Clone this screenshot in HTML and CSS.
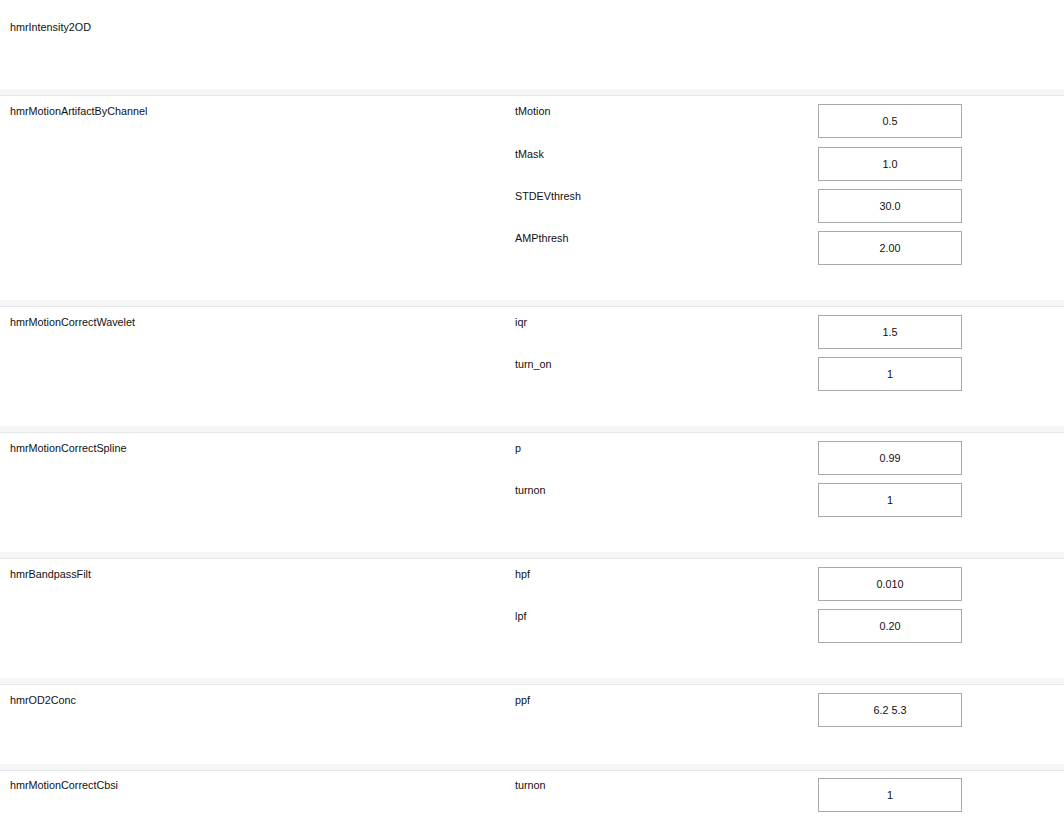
FILE: index.html
```
<!DOCTYPE html>
<html>
<head>
<meta charset="utf-8">
<link rel="stylesheet" href="styles.css">
</head>
<body>
<div class="list">
  <div class="row row-first">
    <div class="name">hmrIntensity2OD</div>
    <div class="params"></div>
  </div>
  <div class="sep"></div>
  <div class="row row-four">
    <div class="name">hmrMotionArtifactByChannel</div>
    <div class="params">
      <div class="param"><div class="plabel">tMotion</div><div class="pinput">0.5</div></div>
      <div class="param"><div class="plabel">tMask</div><div class="pinput">1.0</div></div>
      <div class="param"><div class="plabel">STDEVthresh</div><div class="pinput">30.0</div></div>
      <div class="param"><div class="plabel">AMPthresh</div><div class="pinput">2.00</div></div>
    </div>
  </div>
  <div class="sep"></div>
  <div class="row row-two">
    <div class="name">hmrMotionCorrectWavelet</div>
    <div class="params">
      <div class="param"><div class="plabel">iqr</div><div class="pinput">1.5</div></div>
      <div class="param"><div class="plabel">turn_on</div><div class="pinput">1</div></div>
    </div>
  </div>
  <div class="sep"></div>
  <div class="row row-two">
    <div class="name">hmrMotionCorrectSpline</div>
    <div class="params">
      <div class="param"><div class="plabel">p</div><div class="pinput">0.99</div></div>
      <div class="param"><div class="plabel">turnon</div><div class="pinput">1</div></div>
    </div>
  </div>
  <div class="sep"></div>
  <div class="row row-two">
    <div class="name">hmrBandpassFilt</div>
    <div class="params">
      <div class="param"><div class="plabel">hpf</div><div class="pinput">0.010</div></div>
      <div class="param"><div class="plabel">lpf</div><div class="pinput">0.20</div></div>
    </div>
  </div>
  <div class="sep"></div>
  <div class="row">
    <div class="name">hmrOD2Conc</div>
    <div class="params">
      <div class="param"><div class="plabel">ppf</div><div class="pinput">6.2 5.3</div></div>
    </div>
  </div>
  <div class="sep"></div>
  <div class="row row-last">
    <div class="name">hmrMotionCorrectCbsi</div>
    <div class="params">
      <div class="param"><div class="plabel">turnon</div><div class="pinput">1</div></div>
    </div>
  </div>
</div>
</body>
</html>
```
FILE: styles.css
```
html, body {
  margin: 0;
  padding: 0;
  background: #ffffff;
  overflow: hidden;
}
body {
  font-family: "Liberation Sans", Arial, sans-serif;
  font-size: 10.8px;
  color: #111111;
  width: 1064px;
  height: 839px;
}
.list {
  display: flex;
  flex-direction: column;
}
.row {
  display: flex;
  padding: 8px 0 37px 10px;
}
.row-four {
  padding-bottom: 35px;
}
.row-four .param:first-child {
  margin-bottom: 1px;
}
.row-two {
  padding-bottom: 35px;
}
.row-last {
  padding-top: 7px;
}
.row-last .name,
.row-last .plabel {
  padding-top: 0;
}
.row-first {
  padding-top: 20px;
  padding-bottom: 0;
  height: 89px;
  box-sizing: border-box;
}
.sep {
  height: 6px;
  background: #f6f6f6;
  border-bottom: 1px solid #e6e6e6;
}
.name {
  width: 505px;
  line-height: 14px;
  flex: none;
}
.params {
  display: flex;
  flex-direction: column;
  gap: 8px;
}
.param {
  display: grid;
  grid-template-columns: 303px 144px;
  align-items: start;
}
.plabel {
  line-height: 14px;
}
.pinput {
  height: 34px;
  box-sizing: border-box;
  border: 1px solid #aaaaaa;
  display: flex;
  align-items: center;
  justify-content: center;
}
```
